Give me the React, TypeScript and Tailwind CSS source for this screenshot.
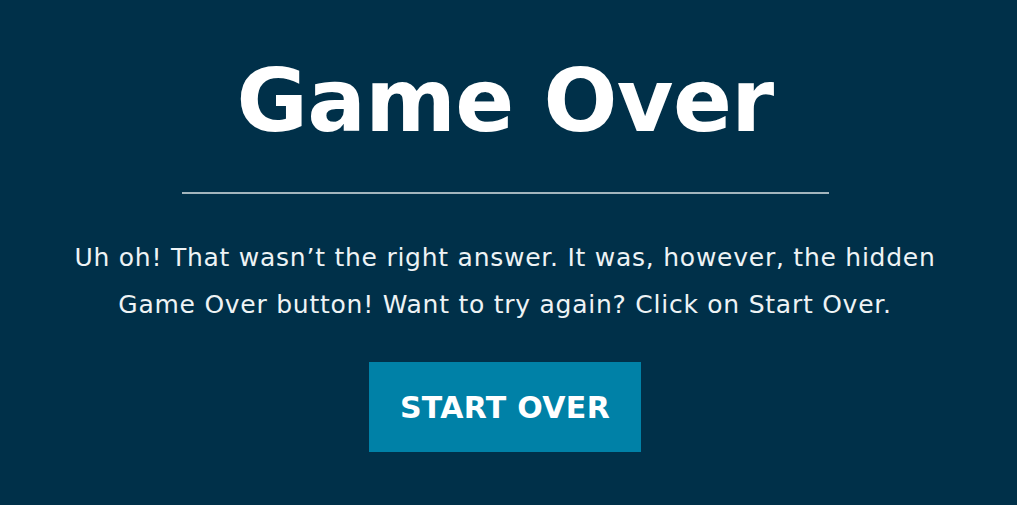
export default function App() {
  return (
    <div className="w-[1017px] h-[505px] bg-[#003049] overflow-hidden" style={{ fontFamily: '"DejaVu Sans", sans-serif' }}>
      <div className="w-[1010px] flex flex-col items-center">
        <h1 className="mt-[58px] text-[87px] leading-none font-bold text-white tracking-[-0.6px]">Game Over</h1>
        <div className="mt-[47px] w-[647px] h-[2px] bg-[#a3b5bd]" />
        <p className="mt-[40px] text-center text-[25px] leading-[47px] tracking-[0.75px] text-[#eef3f5] w-[960px]">
          Uh oh! That wasn’t the right answer. It was, however, the hidden<br />Game Over button! Want to try again? Click on Start Over.
        </p>
        <button className="mt-[34px] w-[272px] h-[90px] bg-[#0081a7] text-white font-bold text-[30px] tracking-[0.3px] flex items-center justify-center">START OVER</button>
      </div>
    </div>
  );
}
